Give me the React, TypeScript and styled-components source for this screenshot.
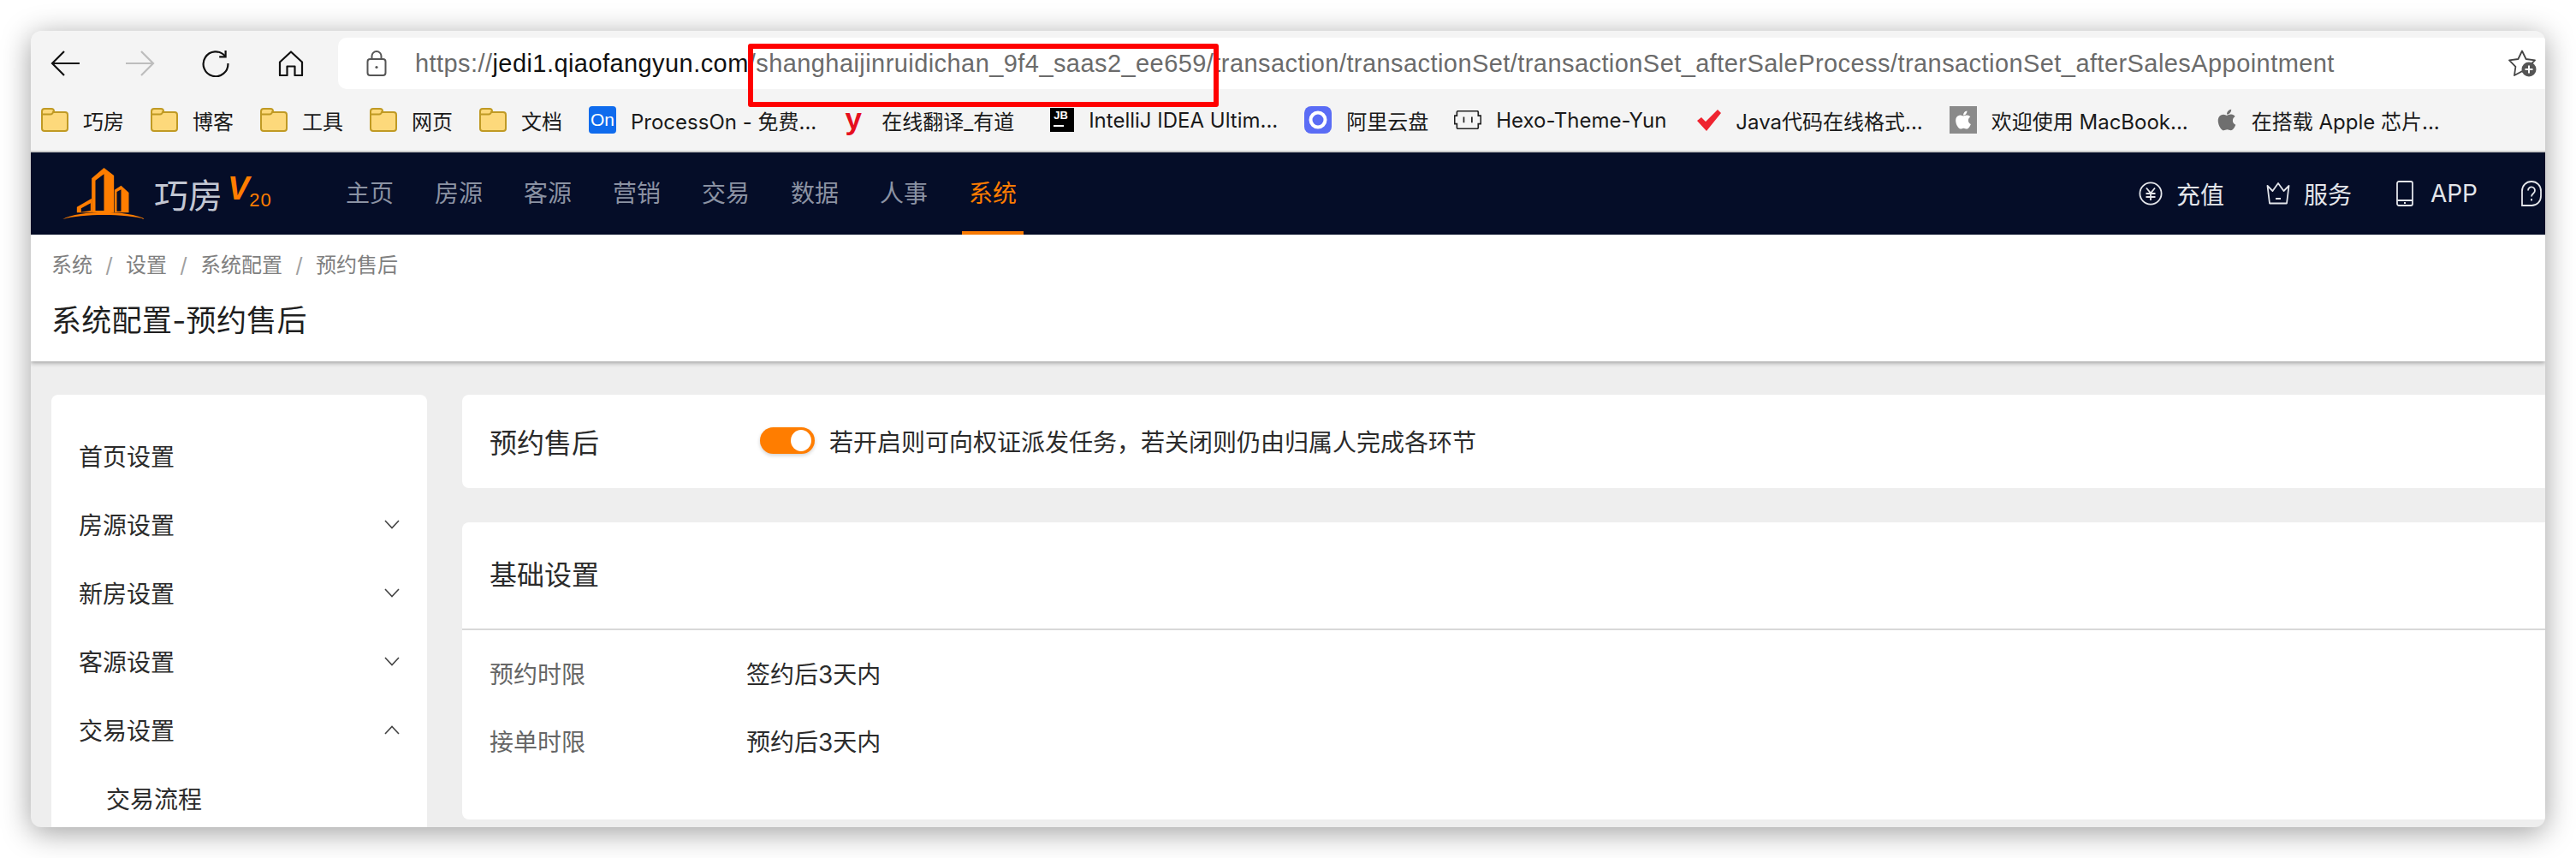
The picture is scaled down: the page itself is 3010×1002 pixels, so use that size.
import React from 'react'
import styled, { createGlobalStyle } from 'styled-components'
import { FaApple } from 'react-icons/fa'

const GlobalStyle = createGlobalStyle`
  html, body {
    margin: 0;
    background: #fff;
    overflow: hidden;
  }
  * {
    box-sizing: border-box;
  }
`

const CJK = `Inter, "Noto Sans CJK SC", sans-serif`
const ORANGE = '#ff7d00'

const Page = styled.div`
  width: 3010px;
  height: 1002px;
  padding: 36px;
  font-family: ${CJK};
`

const BrowserWindow = styled.div`
  position: relative;
  width: 2938px;
  height: 930px;
  background: #eeeeee;
  border-radius: 12px;
  overflow: hidden;
  box-shadow: 0 6px 34px rgba(0, 0, 0, 0.38);
`

const WindowFrame = styled.div`
  position: absolute;
  inset: 0;
  overflow: hidden;
  border-radius: 12px;
  display: flex;
  flex-direction: column;
`

const Toolbar = styled.div`
  display: flex;
  align-items: flex-start;
  height: 68px;
  padding: 8px 0 0 20px;
  background: #f4f4f4;
  flex: none;
`

const ToolButton = styled.span`
  display: flex;
  align-items: center;
  justify-content: center;
  width: 40px;
  height: 60px;
  margin-right: 48px;
`

const AddressBar = styled.div`
  flex: 1;
  display: flex;
  align-items: center;
  height: 60px;
  margin-left: -13px;
  padding-left: 33px;
  background: #fff;
  border-radius: 10px 0 0 10px;
`

const LockSlot = styled.span`
  display: flex;
  width: 24px;
  margin-right: 33px;
`

const Url = styled.div`
  flex: 1;
  font-family: 'Liberation Sans', sans-serif;
  font-size: 29px;
  letter-spacing: 0.43px;
  line-height: 60px;
  margin-top: -1px;
  white-space: nowrap;
  color: #6b6b6b;
`

const UrlHost = styled.span`
  color: #111;
`

const StarSlot = styled.span`
  display: flex;
  width: 35px;
  margin-right: 9px;
`

const Annotation = styled.div`
  position: absolute;
  left: 838px;
  top: 15px;
  width: 550px;
  height: 74px;
  border: 6px solid #ff0000;
  border-radius: 3px;
  z-index: 5;
`

const BookmarkBar = styled.div`
  display: flex;
  align-items: center;
  height: 74px;
  padding-left: 12px;
  background: #f4f4f4;
  border-bottom: 2px solid #cdcdcd;
  flex: none;
`

const Bookmark = styled.div<{ $gap?: number }>`
  display: flex;
  align-items: center;
  gap: 17px;
  margin-right: ${({ $gap }) => $gap ?? 31}px;
  font-size: 24px;
  color: #1a1a1a;
  white-space: nowrap;
`

const BadgeOn = styled.span`
  display: flex;
  align-items: center;
  justify-content: center;
  width: 32px;
  height: 32px;
  border-radius: 4px;
  background: #0f6bed;
  color: #fff;
  font-family: 'Liberation Sans', sans-serif;
  font-size: 21px;
`

const BadgeYoudao = styled.span`
  display: flex;
  justify-content: center;
  width: 32px;
  margin-top: -3px;
  font-family: 'Liberation Sans', sans-serif;
  font-size: 35px;
  line-height: 30px;
  font-weight: 700;
  color: #e60f1e;
`

const BadgeJb = styled.span`
  display: flex;
  flex-direction: column;
  width: 28px;
  height: 28px;
  padding: 2px 4px;
  background: #000;
  color: #fff;
  font-family: 'Liberation Sans', sans-serif;
  font-size: 13px;
  font-weight: 700;
  line-height: 14px;

  &::after {
    content: '';
    width: 12px;
    height: 2px;
    margin-top: 4px;
    background: #fff;
  }
`

const BadgeMac = styled.span`
  display: flex;
  align-items: center;
  justify-content: center;
  width: 32px;
  height: 32px;
  background: #8a8a8a;
  color: #fff;
  font-size: 24px;
`

const AppleSlot = styled.span`
  display: flex;
  justify-content: center;
  width: 24px;
  color: #6f6f6f;
  font-size: 28px;
`

const NavBar = styled.div`
  display: flex;
  align-items: center;
  height: 96px;
  padding-left: 37px;
  background: #050d28;
  flex: none;
`

const Logo = styled.div`
  display: flex;
  align-items: center;
  width: 331px;
`

const LogoName = styled.span`
  margin: 0 6px 0 10px;
  font-size: 40px;
  color: #c3c7d3;
`

const LogoVersion = styled.span`
  display: flex;
  align-items: flex-end;
  color: ${ORANGE};
  font-family: 'Liberation Sans', sans-serif;
  line-height: 1;
`

const LogoV = styled.span`
  font-size: 38px;
  font-weight: 700;
  font-style: italic;
  margin: 0 0 12px 0;
`

const LogoNumber = styled.span`
  font-size: 22px;
  margin-bottom: 6px;
  letter-spacing: 1px;
`

const NavList = styled.div`
  display: flex;
  gap: 48px;
  flex: 1;
`

const NavItem = styled.span<{ $active?: boolean }>`
  position: relative;
  font-size: 28px;
  line-height: 96px;
  color: ${({ $active }) => ($active ? ORANGE : '#8b92a3')};

  &::after {
    content: '';
    display: ${({ $active }) => ($active ? 'block' : 'none')};
    position: absolute;
    left: -8px;
    right: -8px;
    bottom: 0;
    height: 4px;
    background: ${ORANGE};
  }
`

const NavTools = styled.div`
  display: flex;
  align-items: center;
  padding-right: 4px;
`

const NavTool = styled.span<{ $gap: number; $iconGap: number }>`
  display: flex;
  align-items: center;
  gap: ${({ $iconGap }) => $iconGap}px;
  margin-right: ${({ $gap }) => $gap}px;
  font-size: 28px;
  color: #e3e5ea;

  &:last-child {
    margin-right: 0;
  }
`

const PageHeader = styled.div`
  position: relative;
  z-index: 2;
  height: 148px;
  padding: 20px 0 0 24px;
  background: #fff;
  box-shadow: 0 2px 5px rgba(0, 0, 0, 0.32);
  flex: none;
`

const Breadcrumb = styled.div`
  display: flex;
  font-size: 24px;
  line-height: 32px;
  color: #808080;
`

const CrumbSep = styled.span`
  width: 39px;
  text-align: center;
  color: #a0a0a0;
`

const PageTitle = styled.h1`
  margin: 23px 0 0;
  font-size: 35px;
  letter-spacing: 0.3px;
  line-height: 50px;
  font-weight: 400;
  color: #1f1f1f;
`

const Body = styled.div`
  flex: 1;
  display: flex;
  gap: 41px;
  padding: 39px 0 0 24px;
  min-height: 0;
`

const Sidebar = styled.div`
  width: 439px;
  padding-top: 31px;
  flex: none;
  height: 560px;
  background: #fff;
  border-radius: 8px 8px 0 0;
`

const SideItem = styled.div<{ $child?: boolean }>`
  display: flex;
  align-items: center;
  justify-content: space-between;
  height: 80px;
  padding: 0 32px 0 ${({ $child }) => ($child ? 64 : 32)}px;
  font-size: 28px;
  color: #2b2b2b;
`

const Content = styled.div`
  flex: 1;
  display: flex;
  flex-direction: column;
  gap: 40px;
`

const SwitchCard = styled.div`
  display: flex;
  align-items: center;
  height: 109px;
  padding: 0 0 2px 32px;
  background: #fff;
  border-radius: 8px 0 0 8px;
`

const CardTitle = styled.div<{ $width?: number }>`
  width: ${({ $width }) => ($width ? `${$width}px` : 'auto')};
  font-size: 32px;
  color: #2b2b2b;
`

const Toggle = styled.span`
  display: flex;
  justify-content: flex-end;
  align-items: center;
  width: 64px;
  height: 31px;
  margin-right: 17px;
  padding-right: 4px;
  border-radius: 16px;
  background: ${ORANGE};
  box-shadow: 0 2px 4px rgba(0, 0, 0, 0.18);

  &::after {
    content: '';
    width: 24px;
    height: 25px;
    border-radius: 50%;
    background: #fff;
  }
`

const SwitchHint = styled.span`
  font-size: 28px;
  color: #2b2b2b;
`

const SettingsCard = styled.div`
  height: 347px;
  background: #fff;
  border-radius: 8px 0 0 8px;
`

const SettingsHeader = styled.div`
  display: flex;
  align-items: center;
  height: 126px;
  padding-left: 32px;
  padding-bottom: 6px;
  border-bottom: 2px solid #d8d8d8;
`

const SettingsBody = styled.div`
  padding: 10px 0 0 32px;
`

const SettingRow = styled.div`
  display: flex;
  align-items: center;
  height: 79px;
  font-size: 28px;
`

const SettingLabel = styled.span`
  width: 300px;
  color: #666;
`

const SettingValue = styled.span`
  color: #2b2b2b;
`

function BackIcon({ color }: { color: string }) {
  return (
    <svg width="34" height="30" viewBox="0 0 34 30" fill="none" stroke={color} strokeWidth="2.2">
      <path d="M16 1 2 15l14 14M2 15h32" />
    </svg>
  )
}

function ForwardIcon({ color }: { color: string }) {
  return (
    <svg width="34" height="30" viewBox="0 0 34 30" fill="none" stroke={color} strokeWidth="2.2">
      <path d="M18 1l14 14-14 14M32 15H0" />
    </svg>
  )
}

function ReloadIcon() {
  return (
    <svg width="32" height="32" viewBox="0 0 32 32" fill="none" stroke="#111" strokeWidth="2.2">
      <path d="M27 7.5A14.4 14.4 0 1 0 30.4 16" />
      <path d="M27.6 1v7.4h-7.4" />
    </svg>
  )
}

function HomeIcon() {
  return (
    <svg width="30" height="30" viewBox="0 0 30 30" fill="none" stroke="#111" strokeWidth="2.2">
      <path d="M15 1.5 2 13.5V29h8.5V18.5h9V29H28V13.5Z" strokeLinejoin="round" />
    </svg>
  )
}

function LockIcon() {
  return (
    <svg width="24" height="30" viewBox="0 0 24 30" fill="none" stroke="#555" strokeWidth="2">
      <rect x="1.5" y="10" width="21" height="19" rx="3" />
      <path d="M6.5 10V6.5a5.5 5.5 0 0 1 11 0V10" />
      <circle cx="12" cy="19.5" r="1.6" fill="#555" stroke="none" />
    </svg>
  )
}

function StarAddIcon() {
  return (
    <svg width="35" height="32" viewBox="0 0 35 32" fill="none">
      <path
        d="M17 1.5 21.6 11 32 12.4 24.6 19.8 26 30 17 25.2 8 30 9.4 19.8 2 12.4 12.4 11Z"
        stroke="#444"
        strokeWidth="1.8"
        strokeLinejoin="round"
      />
      <circle cx="25" cy="23" r="8.5" fill="#555" />
      <path d="M25 18.5v9M20.5 23h9" stroke="#fff" strokeWidth="2" />
    </svg>
  )
}

function FolderIcon() {
  return (
    <svg width="32" height="28" viewBox="0 0 32 28" fill="#fdd97b" stroke="#c09a24" strokeWidth="2">
      <path d="M4 1h8a3 3 0 0 1 3 3v1h13a3 3 0 0 1 3 3v16a3 3 0 0 1-3 3H4a3 3 0 0 1-3-3V4a3 3 0 0 1 3-3Z" />
      <path d="M1 7.500h10a3 3 0 0 0 3-3V4" fill="none" />
    </svg>
  )
}

function AliyunIcon() {
  return (
    <svg width="32" height="32" viewBox="0 0 32 32">
      <rect width="32" height="32" rx="8" fill="#5a6cf5" />
      <circle cx="16" cy="16" r="8.5" fill="none" stroke="#fff" strokeWidth="4" />
    </svg>
  )
}

function HexoIcon() {
  return (
    <svg width="32" height="22" viewBox="0 0 95 65" fill="none" stroke="#222" strokeWidth="5">
      <path d="M14 2h66a4 4 0 0 1 4 4v12h9v28h-9v13a4 4 0 0 1-4 4H14a4 4 0 0 1-4-4V46H2V18h8V6a4 4 0 0 1 4-4Z" />
      <path d="M34 22v20M62 22v20" />
    </svg>
  )
}

function CheckIcon() {
  return (
    <svg width="28" height="25" viewBox="0 0 28 25" fill="#ef2430">
      <path d="M0 13l5-4 5 5L24 0l4 4L11 25Z" />
    </svg>
  )
}

function YuanIcon() {
  return (
    <svg width="28" height="28" viewBox="0 0 28 28" fill="none" stroke="#e3e5ea" strokeWidth="1.8">
      <circle cx="14" cy="14" r="12.6" />
      <path d="M9 7.500l5 6 5-6M8.500 14h11M8.500 18h11M14 14v8" />
    </svg>
  )
}

function CrownIcon() {
  return (
    <svg width="28" height="28" viewBox="0 0 28 28" fill="none" stroke="#e3e5ea" strokeWidth="1.8">
      <path d="M1.500 5 7.500 11 14 2l6.500 9 6-6-2.500 20.500H4Z" strokeLinejoin="round" />
      <path d="M11 20h6" />
    </svg>
  )
}

function PhoneIcon() {
  return (
    <svg width="20" height="30" viewBox="0 0 20 30" fill="none" stroke="#e3e5ea" strokeWidth="1.8">
      <rect x="1" y="1" width="18" height="28" rx="2" />
      <path d="M1 23h18M9 26h2" />
    </svg>
  )
}

function HelpIcon() {
  return (
    <svg width="24" height="30" viewBox="0 0 24 30" fill="none" stroke="#e3e5ea" strokeWidth="1.8">
      <path d="M12 1a10.800 10.800 0 0 1 11 11v6a10.800 10.800 0 0 1-11 11H1V12A10.800 10.800 0 0 1 12 1Z" />
      <path d="M8 11.500a4 4 0 1 1 6.500 3c-1.500 1.200-2.500 2-2.500 4M12 21v2.500" />
    </svg>
  )
}

function Chevron({ up }: { up?: boolean }) {
  return (
    <svg width="18" height="11" viewBox="0 0 18 11" fill="none" stroke="#444" strokeWidth="1.6">
      <path d={up ? 'M1 10 9 1.500l8 8.500' : 'M1 1l8 8.500L17 1'} />
    </svg>
  )
}

function LogoMark() {
  return (
    <svg width="97" height="60" viewBox="130 48 290 180" fill={ORANGE} fillRule="evenodd">
      <path d="M232 85 275 48 310 75V205H232ZM245 92V198H275V70Z" />
      <path d="M312 125 335 110 362 135V205H312ZM320 132V200H335V124Z" />
      <path d="M180 185 232 155V205H180ZM195 190V203L228 198V172Z" />
      <path d="M130 228C190 196 360 196 420 228 350 208 200 208 130 228Z" />
    </svg>
  )
}

const folders = ['巧房', '博客', '工具', '网页', '文档']
const navItems = ['主页', '房源', '客源', '营销', '交易', '数据', '人事']
const sideItems: { label: string; arrow?: 'up' | 'down'; child?: boolean }[] = [
  { label: '首页设置' },
  { label: '房源设置', arrow: 'down' },
  { label: '新房设置', arrow: 'down' },
  { label: '客源设置', arrow: 'down' },
  { label: '交易设置', arrow: 'up' },
  { label: '交易流程', child: true }
]

export default function App() {
  return (
    <Page>
      <GlobalStyle />
      <BrowserWindow>
        <WindowFrame>
          <Toolbar>
            <ToolButton>
              <BackIcon color="#111" />
            </ToolButton>
            <ToolButton>
              <ForwardIcon color="#bdbdbd" />
            </ToolButton>
            <ToolButton>
              <ReloadIcon />
            </ToolButton>
            <ToolButton>
              <HomeIcon />
            </ToolButton>
            <AddressBar>
              <LockSlot>
                <LockIcon />
              </LockSlot>
              <Url>
                https://<UrlHost>jedi1.qiaofangyun.com</UrlHost>
                /shanghaijinruidichan_9f4_saas2_ee659/transaction/transactionSet/transactionSet_afterSaleProcess/transactionSet_afterSalesAppointment
              </Url>
              <StarSlot>
                <StarAddIcon />
              </StarSlot>
            </AddressBar>
          </Toolbar>
          <BookmarkBar>
            {folders.map(name => (
              <Bookmark key={name}>
                <FolderIcon />
                {name}
              </Bookmark>
            ))}
            <Bookmark $gap={27}>
              <BadgeOn>On</BadgeOn>
              ProcessOn - 免费...
            </Bookmark>
            <Bookmark $gap={42}>
              <BadgeYoudao>y</BadgeYoudao>
              在线翻译_有道
            </Bookmark>
            <Bookmark $gap={31}>
              <BadgeJb>JB</BadgeJb>
              IntelliJ IDEA Ultim...
            </Bookmark>
            <Bookmark $gap={30}>
              <AliyunIcon />
              阿里云盘
            </Bookmark>
            <Bookmark $gap={36}>
              <HexoIcon />
              Hexo-Theme-Yun
            </Bookmark>
            <Bookmark $gap={31}>
              <CheckIcon />
              Java代码在线格式...
            </Bookmark>
            <Bookmark $gap={33}>
              <BadgeMac>
                <FaApple />
              </BadgeMac>
              欢迎使用 MacBook...
            </Bookmark>
            <Bookmark>
              <AppleSlot>
                <FaApple />
              </AppleSlot>
              在搭载 Apple 芯片...
            </Bookmark>
          </BookmarkBar>
          <NavBar>
            <Logo>
              <LogoMark />
              <LogoName>巧房</LogoName>
              <LogoVersion>
                <LogoV>V</LogoV>
                <LogoNumber>20</LogoNumber>
              </LogoVersion>
            </Logo>
            <NavList>
              {navItems.map(item => (
                <NavItem key={item}>{item}</NavItem>
              ))}
              <NavItem $active>系统</NavItem>
            </NavList>
            <NavTools>
              <NavTool $gap={49} $iconGap={16}>
                <YuanIcon />
                充值
              </NavTool>
              <NavTool $gap={52} $iconGap={16}>
                <CrownIcon />
                服务
              </NavTool>
              <NavTool $gap={51} $iconGap={20}>
                <PhoneIcon />
                APP
              </NavTool>
              <NavTool $gap={0} $iconGap={0}>
                <HelpIcon />
              </NavTool>
            </NavTools>
          </NavBar>
          <PageHeader>
            <Breadcrumb>
              系统
              <CrumbSep>/</CrumbSep>
              设置
              <CrumbSep>/</CrumbSep>
              系统配置
              <CrumbSep>/</CrumbSep>
              预约售后
            </Breadcrumb>
            <PageTitle>系统配置-预约售后</PageTitle>
          </PageHeader>
          <Body>
            <Sidebar>
              {sideItems.map(item => (
                <SideItem key={item.label} $child={item.child}>
                  {item.label}
                  {item.arrow && <Chevron up={item.arrow === 'up'} />}
                </SideItem>
              ))}
            </Sidebar>
            <Content>
              <SwitchCard>
                <CardTitle $width={316}>预约售后</CardTitle>
                <Toggle />
                <SwitchHint>若开启则可向权证派发任务，若关闭则仍由归属人完成各环节</SwitchHint>
              </SwitchCard>
              <SettingsCard>
                <SettingsHeader>
                  <CardTitle>基础设置</CardTitle>
                </SettingsHeader>
                <SettingsBody>
                  <SettingRow>
                    <SettingLabel>预约时限</SettingLabel>
                    <SettingValue>签约后3天内</SettingValue>
                  </SettingRow>
                  <SettingRow>
                    <SettingLabel>接单时限</SettingLabel>
                    <SettingValue>预约后3天内</SettingValue>
                  </SettingRow>
                </SettingsBody>
              </SettingsCard>
            </Content>
          </Body>
        </WindowFrame>
        <Annotation />
      </BrowserWindow>
    </Page>
  )
}
